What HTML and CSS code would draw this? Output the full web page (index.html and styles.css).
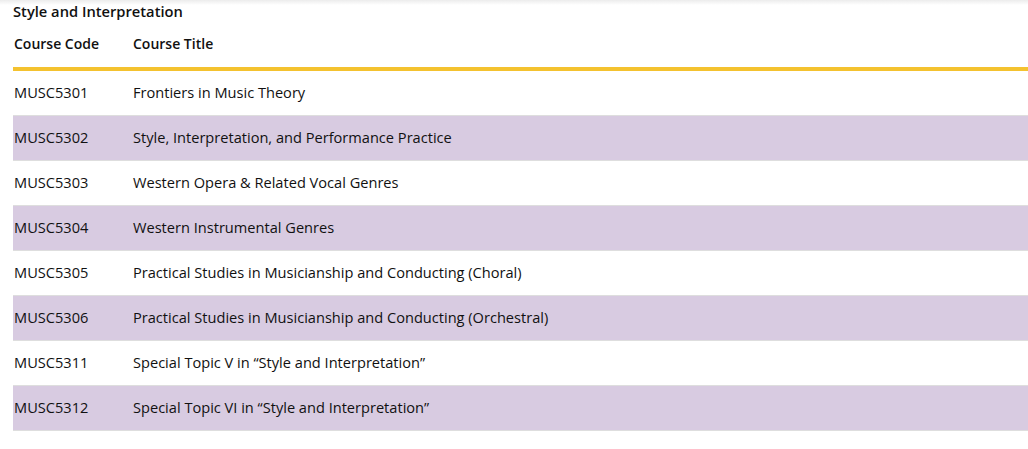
FILE: index.html
```html
<!DOCTYPE html>
<html>
<head>
<meta charset="utf-8">
<link rel="stylesheet" href="styles.css">
</head>
<body>
<div class="page">
  <h3 class="section-title">Style and Interpretation</h3>
  <table class="courses">
    <thead>
      <tr><th class="code">Course Code</th><th>Course Title</th></tr>
    </thead>
    <tbody>
      <tr><td class="code">MUSC5301</td><td>Frontiers in Music Theory</td></tr>
      <tr class="alt"><td class="code">MUSC5302</td><td>Style, Interpretation, and Performance Practice</td></tr>
      <tr><td class="code">MUSC5303</td><td>Western Opera &amp; Related Vocal Genres</td></tr>
      <tr class="alt"><td class="code">MUSC5304</td><td>Western Instrumental Genres</td></tr>
      <tr><td class="code">MUSC5305</td><td>Practical Studies in Musicianship and Conducting (Choral)</td></tr>
      <tr class="alt"><td class="code">MUSC5306</td><td>Practical Studies in Musicianship and Conducting (Orchestral)</td></tr>
      <tr><td class="code">MUSC5311</td><td>Special Topic V in “Style and Interpretation”</td></tr>
      <tr class="alt"><td class="code">MUSC5312</td><td>Special Topic VI in “Style and Interpretation”</td></tr>
    </tbody>
  </table>
</div>
</body>
</html>
```
FILE: styles.css
```css
html, body {
  margin: 0;
  padding: 0;
  background: #fff;
}
body {
  font-family: "Open Sans", "Noto Sans", sans-serif;
  color: #111;
  background: linear-gradient(to bottom, #ececec 0, #fff 5px);
}
.page {
  padding: 1px 0 0 13px;
}
.section-title {
  margin: 0;
  font-size: 14.7px;
  font-weight: 600;
  line-height: 20px;
  color: #111;
}
.courses {
  width: 100%;
  border-collapse: collapse;
  font-size: 14px;
}
.courses th {
  text-align: left;
  font-weight: 600;
  line-height: 20px;
  padding: 13px 1px 13px;
  border-bottom: 4px solid #f4c22f;
}
.courses td {
  font-size: 14.6px;
  line-height: 20px;
  padding: 11px 1px 13px;
  border-bottom: 1px solid #dedede;
}
.courses .code {
  width: 117px;
}
.courses tr.alt td {
  background: #d8cbe1;
}
```
